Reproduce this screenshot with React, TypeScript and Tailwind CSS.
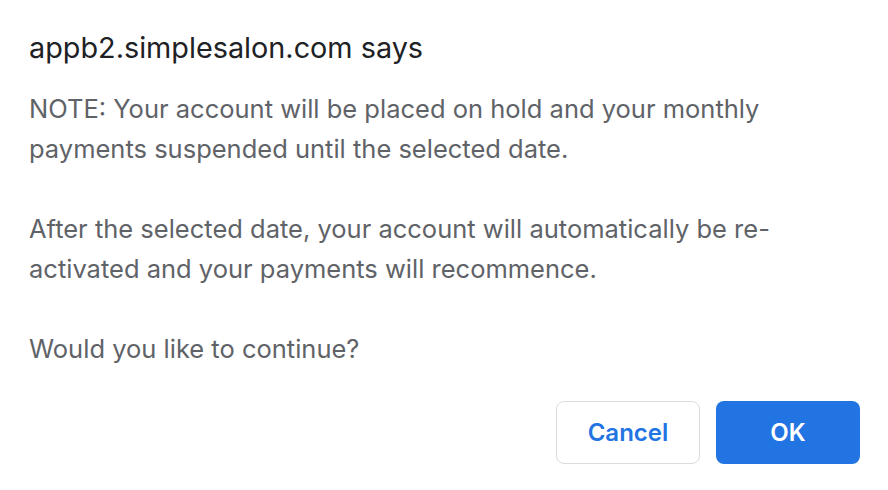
import React from "react";

export default function App() {
  return (
    <div
      className="w-[888px] h-[490px] bg-white pl-[29px] pr-[28px] pt-[30px]"
      style={{ fontFamily: "Inter, 'Noto Sans', sans-serif" }}
    >
      <div className="text-[28.8px] leading-[36px] text-[#202124]">appb2.simplesalon.com says</div>
      <div className="mt-[23px] text-[25.5px] leading-[40px] text-[#5f6368]">
        <p>NOTE: Your account will be placed on hold and your monthly<br />payments suspended until the selected date.</p>
        <p className="mt-[40px]">After the selected date, your account will automatically be re-<br />activated and your payments will recommence.</p>
        <p className="mt-[40px]">Would you like to continue?</p>
      </div>
      <div className="mt-[32px] flex justify-end gap-[16px]">
        <button className="w-[144px] h-[63px] rounded-[8px] border border-[#dadce0] bg-white text-[#2374e3] text-[24px] font-semibold">Cancel</button>
        <button className="w-[144px] h-[63px] rounded-[8px] bg-[#2374e3] text-white text-[24px] font-semibold">OK</button>
      </div>
    </div>
  );
}
